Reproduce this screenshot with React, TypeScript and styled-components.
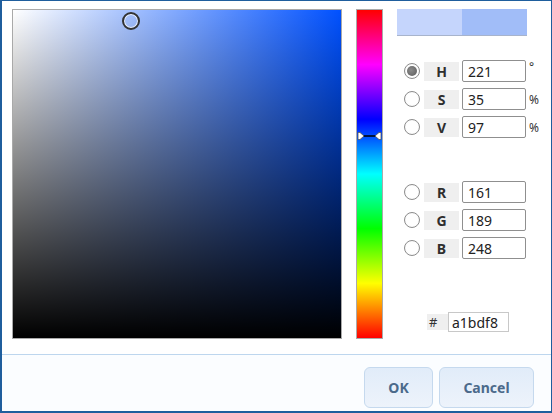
import styled, { createGlobalStyle } from 'styled-components'

// Valores do seletor
const hue = 221
const sat = 35
const val = 97
const size = 330

const GlobalStyle = createGlobalStyle`
  html, body {
    margin: 0;
    padding: 0;
    background: #fff;
  }
  body {
    font-family: "Noto Sans", "DejaVu Sans", sans-serif;
  }
`

const Dialog = styled.div`
  width: 552px;
  height: 413px;
  box-sizing: border-box;
  border: 2px solid #1f5e9d;
  border-top-width: 1px;
  border-right-width: 1px;
  display: flex;
  flex-direction: column;
  background: #fff;
`

const Body = styled.div`
  display: flex;
  align-items: flex-start;
  height: 353px;
  box-sizing: border-box;
  padding: 8px 0 0 10px;
`

const Square = styled.div<{ $hue: number }>`
  position: relative;
  width: ${size}px;
  height: ${size}px;
  box-sizing: border-box;
  border: 1px solid #a9a9a9;
  background:
    linear-gradient(to top, #000, rgba(0, 0, 0, 0)),
    linear-gradient(to right, #fff, hsl(${({ $hue }) => $hue}, 100%, 50%));
`

const Picker = styled.div`
  position: absolute;
  width: 18px;
  height: 18px;
  box-sizing: border-box;
  margin: -9px 0 0 -9px;
  border-radius: 50%;
  border: 2px solid #333;
  box-shadow: inset 0 0 0 1px rgba(255, 255, 255, 0.8);
`

const HueBar = styled.div`
  position: relative;
  margin-left: 14px;
  width: 27px;
  height: ${size}px;
  box-sizing: border-box;
  border: 1px solid #aaa;
  background: linear-gradient(
    to bottom,
    #f00 0%,
    #f0f 16.67%,
    #00f 33.33%,
    #0ff 50%,
    #0f0 66.67%,
    #ff0 83.33%,
    #f00 100%
  );
`

const HueMarker = styled.svg`
  position: absolute;
  left: 0;
  width: 25px;
  height: 10px;
  margin-top: -5px;
`

const Panel = styled.div`
  margin-left: 14px;
  width: 145px;
  display: flex;
  flex-direction: column;
`

const Swatch = styled.div`
  display: flex;
  width: 130px;
  height: 27px;
  box-sizing: border-box;
  border-bottom: 1px solid #a8b4cc;
`

const SwatchHalf = styled.div<{ $color: string }>`
  flex: 1;
  background: ${({ $color }) => $color};
`

const Group = styled.div<{ $top: number }>`
  margin-top: ${({ $top }) => $top}px;
  display: flex;
  flex-direction: column;
  gap: 6px;
`

const Row = styled.div`
  display: flex;
  align-items: center;
  height: 22px;
`

const Radio = styled.span<{ $checked?: boolean }>`
  margin-left: 7px;
  width: 16px;
  height: 16px;
  box-sizing: border-box;
  border-radius: 50%;
  border: 1px solid #8c8c8c;
  background: radial-gradient(circle, #fff 55%, #ececec 100%);
  display: flex;
  align-items: center;
  justify-content: center;

  &::after {
    content: '';
    display: ${({ $checked }) => ($checked ? 'block' : 'none')};
    width: 10px;
    height: 10px;
    border-radius: 50%;
    background: radial-gradient(circle at 40% 40%, #8a8a8a, #5c5c5c);
  }
`

const Label = styled.span`
  margin-left: 4px;
  width: 35px;
  height: 19px;
  background: #efefef;
  display: flex;
  align-items: center;
  justify-content: center;
  font-weight: bold;
  font-size: 14px;
  color: #2e2e2e;
`

const Field = styled.input`
  margin: 0 0 0 3px;
  width: 64px;
  height: 22px;
  box-sizing: border-box;
  border: 1px solid #8f8f8f;
  border-radius: 2px;
  padding: 0 0 0 5px;
  font-family: "Noto Sans", "DejaVu Sans", sans-serif;
  font-size: 14px;
  color: #222;
  background: #fff;
  outline: none;
`

const Unit = styled.span`
  margin-left: 3px;
  font-size: 12px;
  color: #333;
  align-self: flex-start;
  line-height: ${({ children }) => (children === '°' ? '14px' : '24px')};
`

const HexRow = styled.div`
  margin-top: 53px;
  padding-left: 30px;
  display: flex;
  align-items: center;
  height: 20px;
`

const HexLabel = styled.span`
  width: 21px;
  height: 16px;
  background: #efefef;
  font-size: 13px;
  color: #333;
  line-height: 16px;
  padding-left: 2px;
  box-sizing: border-box;
`

const HexField = styled.input`
  margin: 0;
  width: 61px;
  height: 20px;
  box-sizing: border-box;
  border: 1px solid #c8c8c8;
  padding: 0 0 0 3px;
  font-family: "Noto Sans", "DejaVu Sans", sans-serif;
  font-size: 14px;
  color: #222;
  outline: none;
`

const Separator = styled.div`
  height: 1px;
  background: #bdd6ee;
`

const Footer = styled.div`
  flex: 1;
  background: #fbfdff;
  display: flex;
  justify-content: flex-end;
  align-items: flex-start;
  gap: 6px;
  padding: 12px 17px 0 0;
`

const Button = styled.button<{ $w: number }>`
  width: ${({ $w }) => $w}px;
  height: 41px;
  border: 1px solid #c5d9ee;
  border-radius: 6px;
  background: linear-gradient(to bottom, #e1ecf9, #edf3fb);
  font-family: "Noto Sans", "DejaVu Sans", sans-serif;
  font-weight: bold;
  font-size: 14px;
  color: #4b6a8b;
  padding: 0;
`

type Field = { key: string; value: number; unit?: string; checked?: boolean }

const hsv: Field[] = [
  { key: 'H', value: hue, unit: '°', checked: true },
  { key: 'S', value: sat, unit: '%' },
  { key: 'V', value: val, unit: '%' },
]

const rgb: Field[] = [
  { key: 'R', value: 161 },
  { key: 'G', value: 189 },
  { key: 'B', value: 248 },
]

function Fields({ items, top }: { items: Field[]; top: number }) {
  return (
    <Group $top={top}>
      {items.map((f) => (
        <Row key={f.key}>
          <Radio $checked={f.checked} />
          <Label>{f.key}</Label>
          <Field defaultValue={String(f.value)} readOnly />
          {f.unit && <Unit>{f.unit}</Unit>}
        </Row>
      ))}
    </Group>
  )
}

export default function App() {
  const px = (sat / 100) * size - 12 + 12
  const py = (1 - val / 100) * size
  const hy = ((360 - hue) / 360) * size - 1

  return (
    <>
      <GlobalStyle />
      <Dialog>
        <Body>
          <Square $hue={hue}>
            <Picker style={{ left: px + 2, top: py + 1 }} />
          </Square>
          <HueBar>
            <HueMarker viewBox="0 0 25 10" style={{ top: hy }}>
              <line x1="6" y1="5" x2="19" y2="5" stroke="#000" strokeWidth="1.5" />
              <path d="M1 1.5 L3 1.5 L7 5 L3 8.5 L1 8.5 Z" fill="#fff" stroke="#555" strokeWidth="0.8" />
              <path d="M24 1.5 L22 1.5 L18 5 L22 8.5 L24 8.5 Z" fill="#fff" stroke="#555" strokeWidth="0.8" />
            </HueMarker>
          </HueBar>
          <Panel>
            <Swatch>
              <SwatchHalf $color="#c5d5fc" />
              <SwatchHalf $color="#a1bdf8" />
            </Swatch>
            <Fields items={hsv} top={24} />
            <Fields items={rgb} top={43} />
            <HexRow>
              <HexLabel>#</HexLabel>
              <HexField defaultValue="a1bdf8" readOnly />
            </HexRow>
          </Panel>
        </Body>
        <Separator />
        <Footer>
          <Button $w={69}>OK</Button>
          <Button $w={95}>Cancel</Button>
        </Footer>
      </Dialog>
    </>
  )
}
